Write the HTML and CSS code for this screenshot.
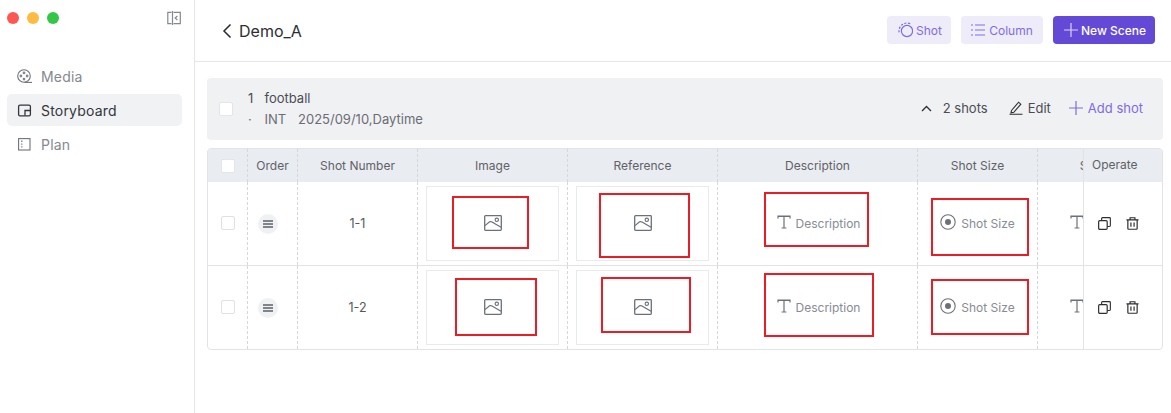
FILE: index.html
```html
<!DOCTYPE html>
<html lang="en">
<head>
<meta charset="utf-8">
<title>Demo_A</title>
<link rel="stylesheet" href="styles.css">
</head>
<body>
<svg class="defs" width="0" height="0" aria-hidden="true">
  <symbol id="i-img" viewBox="0 0 18 16"><rect x="0.7" y="0.7" width="16.6" height="14.6" rx="0.8" fill="none" stroke="currentColor" stroke-width="1.3"/><circle cx="12.8" cy="4.8" r="1.7" fill="none" stroke="currentColor" stroke-width="1.1"/><path d="M1 10.6 L5.6 6.8 Q6.6 6.2 8 7 L17 12.2" fill="none" stroke="currentColor" stroke-width="1.2"/></symbol>
  <symbol id="i-t" viewBox="0 0 14 14"><path d="M1 3.4 V1 H13 V3.4 M1 1.5 H13 M7 1 V13 M4.6 13 H9.4" fill="none" stroke="currentColor" stroke-width="1.2"/></symbol>
  <symbol id="i-radio" viewBox="0 0 16 16"><circle cx="8" cy="8" r="7.2" fill="none" stroke="currentColor" stroke-width="1.1"/><circle cx="8" cy="8" r="3" fill="currentColor"/></symbol>
  <symbol id="i-copy" viewBox="0 0 14 14"><rect x="0.7" y="3.8" width="9.2" height="9.5" rx="1.2" fill="none" stroke="currentColor" stroke-width="1.3"/><path d="M3.9 3.6 V1.7 A1 1 0 0 1 4.9 0.7 H12.3 A1 1 0 0 1 13.3 1.7 V9.2 A1 1 0 0 1 12.3 10.2 H10.2" fill="none" stroke="currentColor" stroke-width="1.2"/></symbol>
  <symbol id="i-trash" viewBox="0 0 14 14"><path d="M0.5 3 H13.5 M4.4 3 V0.8 H9.6 V3 M2 3 V12.4 A0.8 0.8 0 0 0 2.8 13.2 H11.2 A0.8 0.8 0 0 0 12 12.4 V3 M5.3 6 V10.4 M8.7 6 V10.4" fill="none" stroke="currentColor" stroke-width="1.3"/></symbol>
  <symbol id="i-drag" viewBox="0 0 20 20"><circle cx="10" cy="10" r="10" fill="#f0f1f3"/><path d="M5 7 H15 M5 10 H15 M5 13 H15" stroke="#5c6069" stroke-width="1.4"/></symbol>
  <symbol id="i-plus" viewBox="0 0 14 14"><path d="M7 0 V14 M0 7 H14" stroke="currentColor" stroke-width="1.2"/></symbol>
</svg>

<div class="app">
  <aside class="sidebar">
    <div class="titlebar">
      <div class="lights"><span class="light red"></span><span class="light yellow"></span><span class="light green"></span></div>
      <svg class="collapse" width="14" height="14" viewBox="0 0 14 14"><path d="M4.5 1.4 H0.8 V12.6 H4.5 M6.5 1.4 H13.3 V12.6 H6.5" fill="none" stroke="#85888e" stroke-width="1.2"/><path d="M5.5 0 V14" stroke="#85888e" stroke-width="1.2"/><path d="M10.4 5 L8.2 7 L10.4 9" fill="none" stroke="#85888e" stroke-width="1.2"/></svg>
    </div>
    <nav class="nav">
      <a class="nav-item">
        <svg width="15" height="15" viewBox="0 0 15 15"><circle cx="7" cy="7" r="6.3" fill="none" stroke="#6f7279" stroke-width="1.1"/><circle cx="7" cy="3.9" r="1.4" fill="#85888e"/><circle cx="7" cy="10.1" r="1.4" fill="#85888e"/><circle cx="3.9" cy="7" r="1.4" fill="#85888e"/><circle cx="10.1" cy="7" r="1.4" fill="#85888e"/><path d="M7.5 13.4 H15" stroke="#6f7279" stroke-width="1.1"/></svg>
        <span>Media</span>
      </a>
      <a class="nav-item active">
        <svg width="15" height="15" viewBox="0 0 15 15"><rect x="1.6" y="2.1" width="11.8" height="10.8" rx="1.4" fill="none" stroke="#33363b" stroke-width="1.3"/><path d="M13 7.5 H8 V12.5" fill="none" stroke="#33363b" stroke-width="1.3"/></svg>
        <span>Storyboard</span>
      </a>
      <a class="nav-item">
        <svg width="15" height="15" viewBox="0 0 15 15"><rect x="1.6" y="1.6" width="11.4" height="11.4" fill="none" stroke="#6f7279" stroke-width="1.1"/><path d="M4.8 3.6 V5 M4.8 6.4 V7.8 M4.8 9.2 V10.6" stroke="#6f7279" stroke-width="1.2"/></svg>
        <span>Plan</span>
      </a>
    </nav>
  </aside>

  <main class="main">
    <header class="topbar">
      <div class="crumb">
        <svg width="10" height="16" viewBox="0 0 10 16"><path d="M8.5 1.5 L2 8 L8.5 14.5" fill="none" stroke="#26282c" stroke-width="1.5"/></svg>
        <span>Demo_A</span>
      </div>
      <div class="actions">
        <button class="btn soft shot">
          <svg width="16" height="16" viewBox="0 0 16 16"><circle cx="10" cy="9" r="5.6" fill="none" stroke="currentColor" stroke-width="1.2"/><path d="M2.1 10.4 A8 8 0 0 1 14 2.07" fill="none" stroke="currentColor" stroke-width="1.2" stroke-dasharray="2.2 1.5"/></svg>
          Shot
        </button>
        <button class="btn soft column">
          <svg width="14" height="12" viewBox="0 0 14 12"><path d="M0 1 H2 M0 6 H2 M0 11 H2 M4 1 H14 M4 6 H14 M4 11 H14" stroke="currentColor" stroke-width="1.2"/></svg>
          Column
        </button>
        <button class="btn primary">
          <svg class="plus" width="14" height="14"><use href="#i-plus"/></svg>
          New Scene
        </button>
      </div>
    </header>

    <div class="content">
      <section class="scene">
        <span class="check"></span>
        <div class="scene-info">
          <div class="scene-line title"><span class="idx">1</span><span>football</span></div>
          <div class="scene-line meta"><span class="idx">·</span><span class="int">INT</span><span>2025/09/10,Daytime</span></div>
        </div>
        <div class="scene-tools">
          <span class="tool count">
            <svg width="11" height="7" viewBox="0 0 11 7"><path d="M1 6 L5.5 1.5 L10 6" fill="none" stroke="#2c2e33" stroke-width="1.3"/></svg>
            2 shots
          </span>
          <span class="tool edit">
            <svg width="14" height="14" viewBox="0 0 14 14"><path d="M2.5 9.5 L9.6 1.2 L11.8 3.2 L4.8 11.3 L2 11.8 Z M0.5 13.3 H13.5" fill="none" stroke="#2c2e33" stroke-width="1.1"/></svg>
            Edit
          </span>
          <span class="tool add">
            <svg width="14" height="14"><use href="#i-plus"/></svg>
            Add shot
          </span>
        </div>
      </section>

      <section class="table">
        <div class="row head">
          <div class="cell"><span class="check"></span></div>
          <div class="cell">Order</div>
          <div class="cell">Shot Number</div>
          <div class="cell">Image</div>
          <div class="cell">Reference</div>
          <div class="cell">Description</div>
          <div class="cell">Shot Size</div>
          <div class="cell clip"><span class="clip-inner">Sound</span></div>
          <div class="cell op">Operate</div>
        </div>

        <div class="row body">
          <div class="cell"><span class="check light-check"></span></div>
          <div class="cell drag"><svg width="20" height="20"><use href="#i-drag"/></svg></div>
          <div class="cell num">1-1</div>
          <div class="cell"><div class="thumb"><svg width="18" height="16"><use href="#i-img"/></svg><i class="mark m-img1"></i></div></div>
          <div class="cell"><div class="thumb"><svg width="18" height="16"><use href="#i-img"/></svg><i class="mark m-ref1"></i></div></div>
          <div class="cell field desc"><svg class="ti" width="14" height="14"><use href="#i-t"/></svg>Description<i class="mark m-desc1"></i></div>
          <div class="cell field"><svg class="ri" width="16" height="16"><use href="#i-radio"/></svg>Shot Size<i class="mark m-size1"></i></div>
          <div class="cell clip"><span class="clip-inner field"><svg class="ti" width="14" height="14"><use href="#i-t"/></svg>Sound</span></div>
          <div class="cell op"><svg width="13" height="13"><use href="#i-copy"/></svg><svg width="13" height="13"><use href="#i-trash"/></svg></div>
        </div>

        <div class="row body">
          <div class="cell"><span class="check light-check"></span></div>
          <div class="cell drag"><svg width="20" height="20"><use href="#i-drag"/></svg></div>
          <div class="cell num">1-2</div>
          <div class="cell"><div class="thumb"><svg width="18" height="16"><use href="#i-img"/></svg><i class="mark m-img2"></i></div></div>
          <div class="cell"><div class="thumb"><svg width="18" height="16"><use href="#i-img"/></svg><i class="mark m-ref2"></i></div></div>
          <div class="cell field desc"><svg class="ti" width="14" height="14"><use href="#i-t"/></svg>Description<i class="mark m-desc2"></i></div>
          <div class="cell field"><svg class="ri" width="16" height="16"><use href="#i-radio"/></svg>Shot Size<i class="mark m-size2"></i></div>
          <div class="cell clip"><span class="clip-inner field"><svg class="ti" width="14" height="14"><use href="#i-t"/></svg>Sound</span></div>
          <div class="cell op"><svg width="13" height="13"><use href="#i-copy"/></svg><svg width="13" height="13"><use href="#i-trash"/></svg></div>
        </div>
      </section>
    </div>
  </main>
</div>
</body>
</html>
```

FILE: styles.css
```css
* { box-sizing: border-box; }
html, body { margin: 0; height: 100%; }
body {
  background: #fff;
  font-family: Inter, "Liberation Sans", sans-serif;
  color: #33363b;
  overflow: hidden;
}
.defs { position: absolute; }
.app { display: flex; height: 413px; }

/* Sidebar */
.sidebar { width: 195px; flex: none; border-right: 1px solid #e5e6e8; padding: 0 12px 0 7px; }
.titlebar { height: 60px; display: flex; align-items: flex-start; justify-content: space-between; padding-top: 11px; }
.lights { display: flex; gap: 8px; padding-top: 1px; }
.light { width: 12px; height: 12px; border-radius: 50%; }
.red { background: #fc5753; }
.yellow { background: #fdbc40; }
.green { background: #33c748; }
.collapse { margin-right: 1px; }
.nav { display: flex; flex-direction: column; gap: 2px; }
.nav-item {
  height: 32px; display: flex; align-items: center; gap: 9px;
  padding-left: 10px; border-radius: 5px;
  font-size: 14px; letter-spacing: 0.2px; color: #85888e;
}
.nav-item.active { background: #f1f2f4; color: #33363b; }

/* Top bar */
.main { flex: 1; min-width: 0; }
.topbar {
  height: 62px; border-bottom: 1px solid #e5e6e8;
  display: flex; align-items: flex-start; justify-content: space-between;
  padding: 16px 16px 0 27px;
}
.crumb { display: flex; align-items: center; gap: 7px; height: 29px; font-size: 16px; color: #2c2e33; }
.actions { display: flex; gap: 10px; }
.btn {
  height: 28px; border: 0; border-radius: 4px; padding: 0;
  display: flex; align-items: center; justify-content: center; gap: 3px;
  font: 500 12px/27px Inter, "Liberation Sans", sans-serif;
}
.btn.soft { background: #efecfa; color: #7f6ce2; font-weight: 400; }
.btn.shot { width: 64px; padding-left: 1px; }
.btn.column { width: 82px; gap: 4px; }
.btn.primary { width: 102px; background: #6349d6; color: #fff; padding-left: 2px; }
.btn .plus { color: #d9d3f6; }

/* Scene card */
.content { padding: 16px 8px 0 12px; }
.scene {
  height: 62px; background: #f0f1f3; border-radius: 4px;
  display: flex; align-items: center; padding: 0 20px 0 12px;
}
.check { width: 14px; height: 14px; background: #fff; border: 1px solid #e4e5e8; border-radius: 2px; display: block; }
.light-check { border-color: #dfe1e5; margin-top: -1px; }
.scene-info { margin: -2px 0 0 15px; font-size: 13px; }
.scene-line { display: flex; height: 21px; align-items: center; }
.title { color: #4a4d53; }
.meta { color: #6a6d73; }
.idx { width: 16.5px; }
.int { width: 33.5px; }
.scene-tools { margin: -2px 0 0 auto; display: flex; align-items: center; font-size: 13px; color: #4a4d53; }
.tool { display: flex; align-items: center; }
.count { gap: 11px; margin-right: 21px; }
.edit { gap: 5px; margin-right: 18px; }
.add { gap: 5px; color: #7f6ce2; }

/* Table */
.table { margin-top: 8px; border: 1px solid #e1e3e6; border-radius: 4px; overflow: hidden; }
.row { display: grid; grid-template-columns: 40px 50px 120px 150px 150px 200px 120px 45px 1fr; }
.head { height: 33px; background: #e9ecf0; font-size: 12px; color: #5f6268; }
.body { height: 84px; border-bottom: 1px solid #e1e3e6; }
.body:last-child { height: 83px; border-bottom: 0; }
.cell {
  position: relative; display: flex; align-items: center; justify-content: center;
  border-right: 1px dashed #d5d7da; min-width: 0;
}
.drag { justify-content: flex-start; padding-left: 10px; }
.num { font-size: 12.5px; color: #55585e; }
.thumb {
  position: relative; width: 133px; height: 75px; margin-top: -1px;
  border: 1px solid #e9eaec;
  display: flex; align-items: center; justify-content: center; color: #6c7079;
}
.field { font-size: 12px; color: #888c94; gap: 5px; }
.desc { padding-left: 2px; }
.ti { color: #6c7079; margin-top: -3px; }
.ri { color: #6c7079; margin-top: -3px; }
.clip { border-right: 0; overflow: hidden; justify-content: flex-start; }
.clip-inner { flex: none; width: 120px; display: flex; justify-content: center; align-items: center; }
.cell.op { border-right: 0; border-left: 1px solid #e1e3e6; gap: 15px; color: #2c2e33; justify-content: flex-start; padding-left: 14px; }
.head .cell.op { padding-left: 8px; padding-bottom: 2px; color: #5f6268; }

/* Red review annotations */
.mark { position: absolute; border: 2px solid #ed1c24; display: block; pointer-events: none; }
.m-img1 { left: 25px; top: 9px; width: 77px; height: 53px; }
.m-img2 { left: 28px; top: 7px; width: 82px; height: 58px; }
.m-ref1 { left: 22px; top: 6px; width: 91px; height: 65px; }
.m-ref2 { left: 24px; top: 6px; width: 90px; height: 56px; }
.m-desc1 { left: 46px; top: 10px; width: 105px; height: 55px; }
.m-desc2 { left: 46px; top: 7px; width: 110px; height: 64px; }
.m-size1 { left: 13px; top: 16px; width: 98px; height: 58px; }
.m-size2 { left: 13px; top: 13px; width: 98px; height: 56px; }
```
